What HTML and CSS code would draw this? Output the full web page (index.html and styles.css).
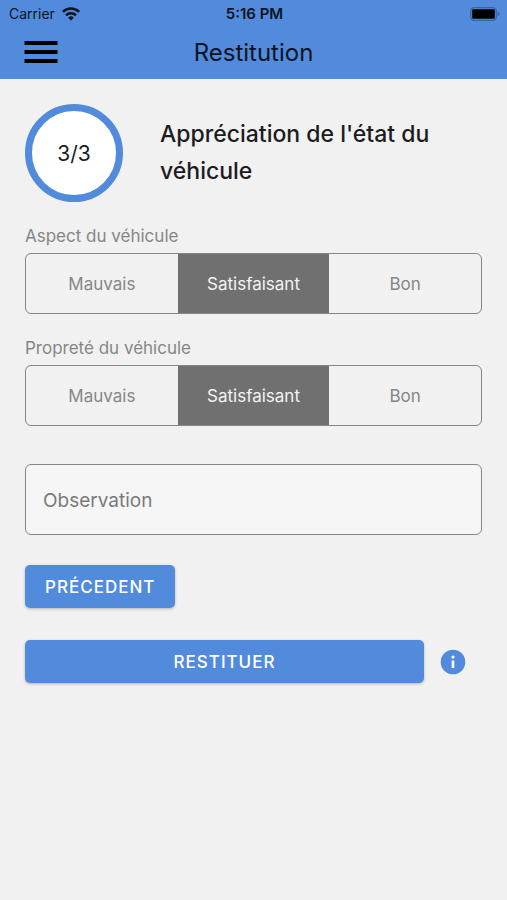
FILE: index.html
```html
<!DOCTYPE html>
<html lang="fr">

<head>
    <meta charset="UTF-8">
    <meta name="viewport" content="width=device-width, initial-scale=1.0">
    <title>Restitution</title>
    <link rel="stylesheet" href="styles.css">
</head>

<body>
    <header>
        <div class="status">
            <div class="carrier">
                <span>Carrier</span>
                <svg width="18" height="14" viewBox="0 0 18 14" fill="none" stroke="#0a1424" stroke-width="2.6">
                    <path d="M0.9 4.9a11.5 11.5 0 0 1 16.2 0" />
                    <path d="M4 8.3a7 7 0 0 1 10 0" />
                    <path d="M9 13.6L6.1 10.7a4.1 4.1 0 0 1 5.8 0z" fill="#0a1424" stroke="none" />
                </svg>
            </div>
            <span class="time">5:16 PM</span>
            <svg class="battery" width="30" height="14" viewBox="0 0 30 14">
                <rect x="0.7" y="0.7" width="25.6" height="12.6" rx="3.5" fill="none" stroke="#3a659f" stroke-width="1.3" />
                <rect x="2.2" y="2.2" width="22.6" height="9.6" rx="1.2" fill="#000" />
                <path d="M27.6 4.8q2 .6 2 2.2t-2 2.2z" fill="#3a659f" />
            </svg>
        </div>
        <div class="toolbar">
            <button type="button" class="menu" aria-label="Menu">
                <svg width="34" height="24" viewBox="0 0 34 24" fill="#000">
                    <rect x="0.5" y="1" width="33" height="4" />
                    <rect x="0.5" y="10" width="33" height="4" />
                    <rect x="0.5" y="19" width="33" height="4" />
                </svg>
            </button>
            <h1>Restitution</h1>
        </div>
    </header>

    <main>
        <div class="step">
            <div class="circle">3/3</div>
            <h2>Appréciation de l'état du véhicule</h2>
        </div>

        <form>
            <fieldset>
                <legend>Aspect du véhicule</legend>
                <div class="segment">
                    <label><input type="radio" name="aspect" value="mauvais"><span>Mauvais</span></label>
                    <label><input type="radio" name="aspect" value="satisfaisant" checked><span>Satisfaisant</span></label>
                    <label><input type="radio" name="aspect" value="bon"><span>Bon</span></label>
                </div>
            </fieldset>

            <fieldset>
                <legend>Propreté du véhicule</legend>
                <div class="segment">
                    <label><input type="radio" name="proprete" value="mauvais"><span>Mauvais</span></label>
                    <label><input type="radio" name="proprete" value="satisfaisant" checked><span>Satisfaisant</span></label>
                    <label><input type="radio" name="proprete" value="bon"><span>Bon</span></label>
                </div>
            </fieldset>

            <input type="text" class="observation" name="observation" placeholder="Observation" aria-label="Observation">

            <button type="button" class="btn">PRÉCEDENT</button>

            <div class="submit">
                <button type="submit" class="btn">RESTITUER</button>
                <button type="button" class="info" aria-label="Informations">
                    <svg width="26" height="26" viewBox="0 0 26 26">
                        <circle cx="13" cy="13" r="12.3" fill="#528adc" />
                        <circle cx="13" cy="8.1" r="1.6" fill="#fff" />
                        <rect x="11.7" y="11.5" width="2.6" height="7.5" fill="#fff" />
                    </svg>
                </button>
            </div>
        </form>
    </main>
</body>

</html>
```
FILE: styles.css
```css
* {
    box-sizing: border-box;
}

body {
    margin: 0;
    background-color: #f1f1f1;
    color: #1c1c1e;
    font-family: Inter, "Liberation Sans", sans-serif;
}

header {
    background-color: #528adc;
    color: #0a1424;
    height: 79px;
}

.status {
    display: grid;
    grid-template-columns: 1fr auto 1fr;
    align-items: center;
    height: 27px;
    padding: 0 7px 0 9px;
    font-size: 14px;
}

.carrier {
    display: flex;
    align-items: center;
    gap: 7px;
}

.time {
    font-size: 15px;
    font-weight: 600;
}

.battery {
    justify-self: end;
}

.toolbar {
    display: grid;
    grid-template-columns: 1fr auto 1fr;
    align-items: center;
    height: 50px;
    padding: 0 24px;
}

.menu,
.info {
    display: flex;
    padding: 0;
    border: none;
    background: none;
    cursor: pointer;
}

h1 {
    margin: 0;
    font-size: 24px;
    font-weight: 400;
}

main {
    padding: 25px;
}

.step {
    display: flex;
    align-items: center;
    gap: 37px;
    margin-bottom: 24px;
}

.circle {
    display: flex;
    flex: none;
    justify-content: center;
    align-items: center;
    width: 98px;
    height: 98px;
    border: 7px solid #528adc;
    border-radius: 50%;
    background-color: #fff;
    font-size: 21px;
}

h2 {
    margin: 0;
    font-size: 23px;
    font-weight: 500;
    line-height: 37px;
}

fieldset {
    min-width: 0;
    margin: 0 0 24px;
    padding: 0;
    border: none;
}

legend {
    padding: 0;
    color: #868686;
    font-size: 17px;
    line-height: 20px;
    margin-bottom: 7px;
}

.segment {
    display: flex;
    height: 61px;
    border: 1px solid #868686;
    border-radius: 6px;
    overflow: hidden;
}

.segment label {
    display: flex;
    position: relative;
    flex: 1;
    cursor: pointer;
}

.segment input {
    position: absolute;
    opacity: 0;
}

.segment span {
    display: flex;
    flex: 1;
    justify-content: center;
    align-items: center;
    color: #868686;
    font-size: 17px;
}

.segment input:checked + span {
    background-color: #707070;
    color: #f4f4f4;
}

.observation {
    display: block;
    width: 100%;
    height: 71px;
    margin: 38px 0 30px;
    padding: 2px 17px 0;
    border: 1px solid #868686;
    border-radius: 6px;
    background-color: #f6f6f6;
    font-family: inherit;
    font-size: 19px;
}

.observation::placeholder {
    color: #7a7a7a;
    opacity: 1;
}

.btn {
    height: 43px;
    padding: 0 20px;
    border: none;
    border-radius: 5px;
    background-color: #528adc;
    box-shadow: 0 1px 3px rgba(0, 0, 0, 0.25);
    color: #fff;
    cursor: pointer;
    font-family: inherit;
    font-size: 17px;
    font-weight: 500;
    letter-spacing: 1px;
}

.submit {
    display: flex;
    align-items: center;
    gap: 16px;
    margin-top: 32px;
    padding-right: 16px;
}

.submit .btn {
    flex: 1;
}
```
